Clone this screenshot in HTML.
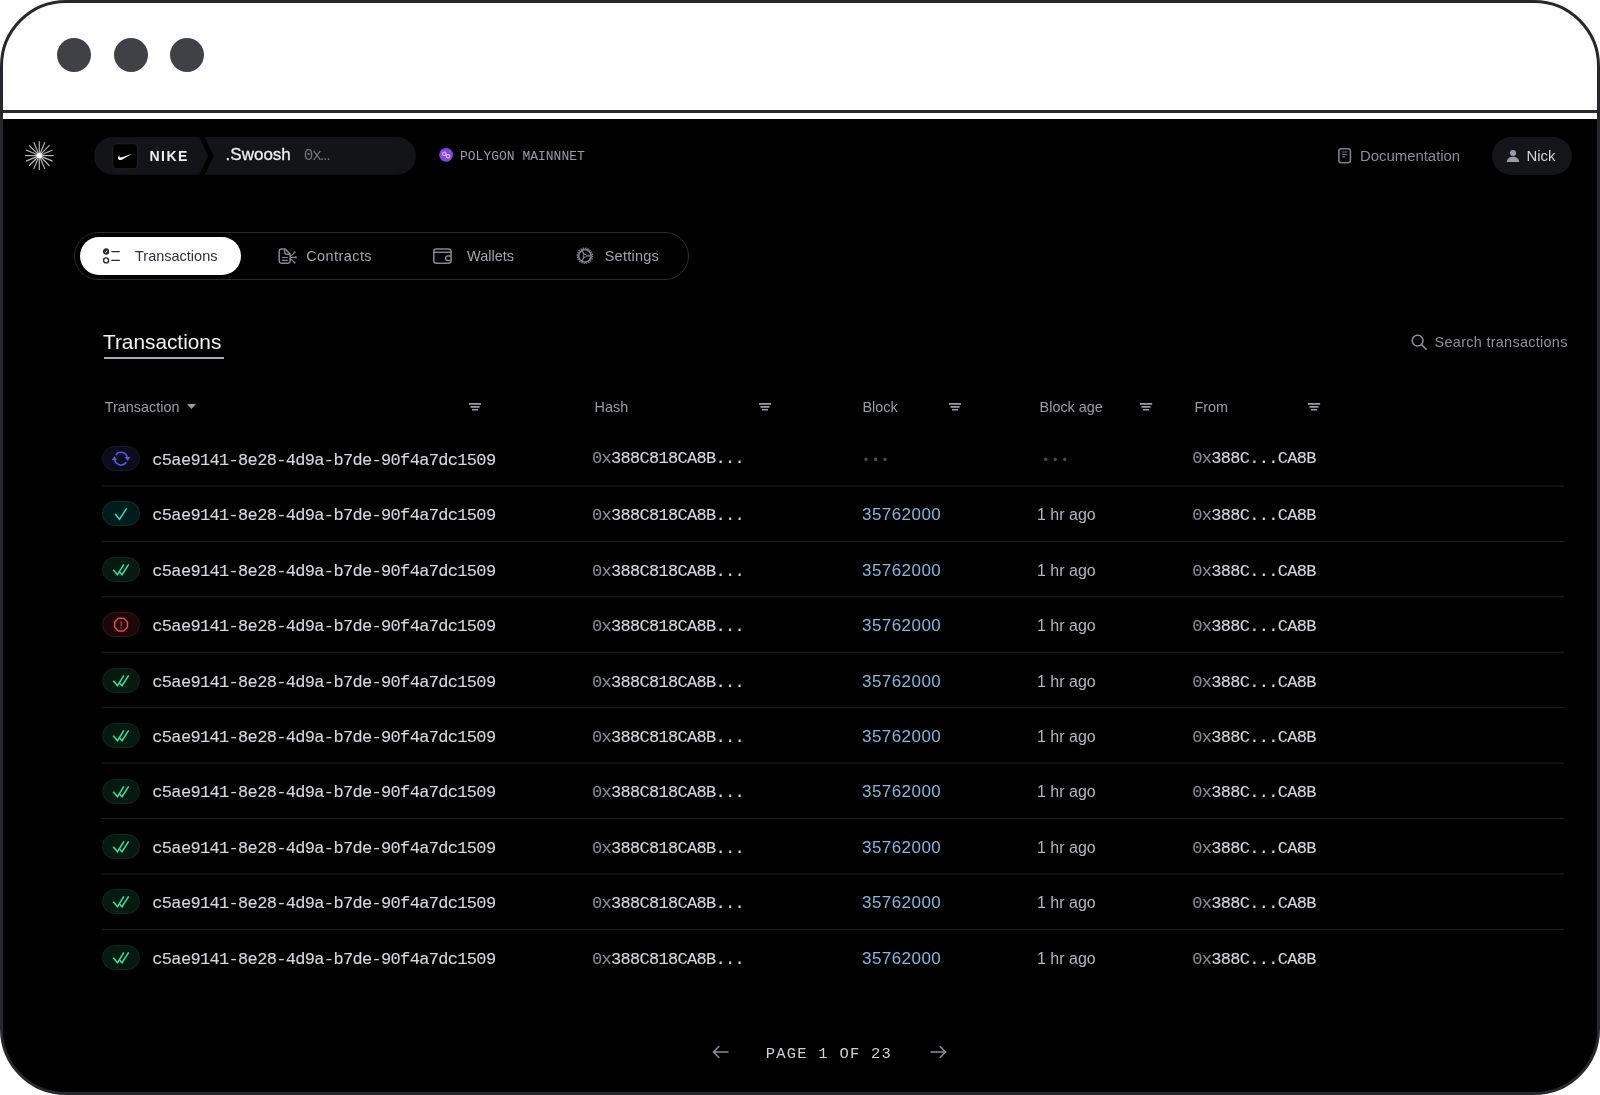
<!DOCTYPE html>
<html lang="en">
<head>
<meta charset="utf-8">
<title>Transactions</title>
<style>
*{box-sizing:border-box;margin:0;padding:0}
html,body{width:1600px;height:1095px;background:#fff;overflow:hidden}
body{position:relative;font-family:"Liberation Sans",sans-serif;-webkit-font-smoothing:antialiased}
.frame{position:absolute;left:0;top:0;width:1600px;height:1095px;border:3px solid #26282e;border-radius:66px;overflow:hidden;background:linear-gradient(to bottom,#fff 0,#fff 300px,#000 300px,#000 100%)}
.inner{position:absolute;left:-3px;top:-3px;width:1600px;height:1095px;will-change:transform}
.abs{position:absolute}
.t{position:absolute;white-space:nowrap;line-height:1}
.mono{font-family:"Liberation Mono",monospace}
.c1,.c2,.c5{-webkit-text-stroke:0.12px}
.dot{position:absolute;top:38px;width:34px;height:34px;border-radius:50%;background:#404147}
.bar{position:absolute;left:0;top:110px;width:1600px;height:3px;background:#26282e}
.app{position:absolute;left:0;top:119px;width:1600px;height:976px;background:#000}
svg{position:absolute;overflow:visible}
.hd{color:#9c9ea6;font-size:14.4px}
.pill{position:absolute;left:102px;width:38px;height:25px;border-radius:13px;border:1px solid}
.c1{left:152.3px;font-size:17px;letter-spacing:-0.67px;color:#d6d7dc}
.c2{left:592px;font-size:17px;letter-spacing:-0.7px;color:#d6d7dc}
.c3{left:862px;font-size:17px;color:#82b8e1}
.c4{left:1037px;font-size:16px;color:#b3b5bc}
.c5{left:1192.3px;font-size:17px;letter-spacing:-0.7px;color:#d6d7dc}
.g{color:#8a8c94}
</style>
</head>
<body>
<div class="frame"><div class="inner">
  <div class="dot" style="left:57px"></div>
  <div class="dot" style="left:113.5px"></div>
  <div class="dot" style="left:170.4px"></div>
  <div class="bar"></div>
  <div class="app"></div>
<!--CONTENT-->

  <!-- top nav -->
  <svg class="abs" style="left:0;top:0" width="80" height="200"><g stroke="#b9b9b9" stroke-width="1.15" stroke-linecap="butt"><line x1="41.30" y1="155.60" x2="53.70" y2="155.60"/><line x1="41.15" y1="156.37" x2="52.60" y2="161.11"/><line x1="40.71" y1="157.01" x2="49.48" y2="165.78"/><line x1="40.07" y1="157.45" x2="44.81" y2="168.90"/><line x1="39.30" y1="157.60" x2="39.30" y2="170.00"/><line x1="38.53" y1="157.45" x2="33.79" y2="168.90"/><line x1="37.89" y1="157.01" x2="29.12" y2="165.78"/><line x1="37.45" y1="156.37" x2="26.00" y2="161.11"/><line x1="37.30" y1="155.60" x2="24.90" y2="155.60"/><line x1="37.45" y1="154.83" x2="26.00" y2="150.09"/><line x1="37.89" y1="154.19" x2="29.12" y2="145.42"/><line x1="38.53" y1="153.75" x2="33.79" y2="142.30"/><line x1="39.30" y1="153.60" x2="39.30" y2="141.20"/><line x1="40.07" y1="153.75" x2="44.81" y2="142.30"/><line x1="40.71" y1="154.19" x2="49.48" y2="145.42"/><line x1="41.15" y1="154.83" x2="52.60" y2="150.09"/></g><circle cx="39.3" cy="155.6" r="2.6" fill="#fff"/></svg>
  <svg style="left:0;top:0" width="420" height="180">
    <path d="M113 137 H199.2 L208.1 155.9 L199.2 174.8 H113 A18.9 18.9 0 0 1 113 137Z" fill="#131417"/>
    <path d="M204.8 137 H397 A18.9 18.9 0 0 1 397 174.8 H204.8 L213.7 155.9Z" fill="#131417"/>
    <rect x="112.7" y="143.7" width="25" height="25.2" rx="4" fill="#000" stroke="#1d1e22" stroke-width="1.3"/>
    <path d="M132.3 153.8L122.2 159.4C120.2 160.5 118.4 160.1 118 158.8C117.7 157.7 118.3 156.2 119.5 154.9C119.1 156.2 119.3 157.3 120.6 157.4C121.3 157.4 122.1 157.2 122.9 156.9Z" fill="#fff"/>
  </svg>
  <div class="t" id="nike" style="left:149.5px;top:148.5px;font-size:14px;font-weight:700;letter-spacing:1.5px;color:#eceef2">NIKE</div>
  <div class="t" id="swoosh" style="left:225.6px;top:146.4px;font-size:17px;-webkit-text-stroke:0.3px;color:#eceef2">.Swoosh</div>
  <div class="t mono" id="ox" style="left:303.8px;top:147.6px;font-size:16px;letter-spacing:-1.2px;color:#74767e">0x…</div>
  <svg style="left:439px;top:148px" width="14" height="14" viewBox="0 0 14 14">
    <circle cx="7.1" cy="6.85" r="6.95" fill="#8247e5"/>
    <circle cx="5.3" cy="5.75" r="1.75" fill="none" stroke="#dccdf8" stroke-width="1.1"/>
    <circle cx="9" cy="8.2" r="1.75" fill="none" stroke="#dccdf8" stroke-width="1.1"/>
  </svg>
  <div class="t mono" id="poly" style="left:460px;top:149.6px;font-size:13px;color:#9a9ca4">POLYGON MAINNNET</div>

  <svg style="left:1338px;top:147px" width="14" height="18" viewBox="0 0 14 18" fill="none" stroke="#7c808a" stroke-width="1.6">
    <rect x="0.9" y="1.7" width="11.5" height="14" rx="2.4"/>
    <path d="M4.1 5h5.3M4.1 7.5h5.3M4.1 9.85h3" stroke-width="1.2" stroke="#6d717b"/>
  </svg>
  <div class="t" id="doc" style="left:1360px;top:149px;font-size:14.9px;color:#8b8d95">Documentation</div>
  <div class="abs" style="left:1492px;top:137px;width:80px;height:38px;border-radius:19px;background:#141518"></div>
  <svg style="left:1507px;top:150px" width="12" height="12" viewBox="0 0 12 12" fill="#9a9ca6">
    <circle cx="6.05" cy="2.95" r="3.05"/>
    <path d="M-0.2 11.9c0.2-3.4 2.9-5.2 6.2-5.2s6 1.8 6.2 5.2z"/>
  </svg>
  <div class="t" id="nick" style="left:1526.5px;top:149px;font-size:14.9px;color:#d3d4d9">Nick</div>

  <!-- tabs -->
  <div class="abs" style="left:74px;top:232px;width:615px;height:48px;border-radius:24px;border:1px solid #2b2c31"></div>
  <div class="abs" style="left:80px;top:237px;width:161px;height:38px;border-radius:19px;background:#fff"></div>
  <svg style="left:102px;top:248px" width="20" height="17" viewBox="0 0 20 17" fill="none" stroke="#2a2b30" stroke-width="1.4">
    <circle cx="4.05" cy="3.5" r="2.5" fill="#2a2b30"/>
    <path d="M2.9 3.7l0.8 0.8l1.5-1.9" stroke="#fff" stroke-width="0.9"/>
    <circle cx="4.05" cy="12.4" r="2.5"/>
    <path d="M9.9 3.6h7.4M9.9 12.4h7.4" stroke-linecap="round"/>
  </svg>
  <div class="t" id="tab1" style="left:135px;top:249px;font-size:14.5px;color:#303137">Transactions</div>

  <svg style="left:272px;top:242px" width="30" height="28" viewBox="0 0 30 28" fill="none" stroke="#868892" stroke-width="1.5" stroke-linejoin="round">
    <path d="M13.4 6.9H9.5A2.3 2.3 0 0 0 7.2 9.2V18.9A2.3 2.3 0 0 0 9.5 21.2H15.8A2.3 2.3 0 0 0 18.1 18.9V12.2L13.4 6.9"/>
    <path d="M12.7 7.2V10.6A1.6 1.6 0 0 0 14.3 12.2H18.1"/>
    <path d="M10.2 15.5H15.8M10.2 18.3H15.8" stroke-width="1.2"/>
    <path d="M18.6 13.6Q20.6 13.4 21.9 10.9M18.8 15.4H23.2M18.6 17.4Q20.6 17.8 21.9 19.9" stroke-width="1.1"/>
    <circle cx="22.5" cy="10.3" r="1.1" fill="#868892" stroke="none"/><circle cx="23.8" cy="15.4" r="1.1" fill="#868892" stroke="none"/><circle cx="22.5" cy="20.5" r="1.1" fill="#868892" stroke="none"/>
  </svg>
  <div class="t" id="tab2" style="left:306.2px;top:249px;font-size:14.5px;letter-spacing:0.42px;color:#a3a5ad">Contracts</div>

  <svg style="left:433px;top:248px" width="20" height="16" viewBox="0 0 20 16" fill="none" stroke="#868892" stroke-width="1.5">
    <rect x="0.8" y="0.9" width="17.3" height="14.3" rx="2.6"/>
    <path d="M0.8 4.3h17.3"/>
    <path d="M18.1 8h-3.2a2.2 2.2 0 0 0 0 4.4h3.2"/>
  </svg>
  <div class="t" id="tab3" style="left:467px;top:249px;font-size:14.5px;color:#a3a5ad">Wallets</div>

  <svg style="left:576px;top:247px" width="18" height="18" viewBox="0 0 18 18" fill="none" stroke="#868892">
    <circle cx="8.9" cy="8.8" r="7.5" stroke-width="1.6" stroke-dasharray="1.25 1.106"/>
    <circle cx="8.9" cy="8.8" r="6.2" stroke-width="1.5"/>
    <path d="M10.30 8.80L14.90 8.80M8.20 10.01L5.90 14.00M8.20 7.59L5.90 3.60" stroke-width="1.3"/>
    <circle cx="8.9" cy="8.8" r="1.5" stroke-width="1"/>
  </svg>
  <div class="t" id="tab4" style="left:604.7px;top:249px;font-size:14.5px;letter-spacing:0.25px;color:#a3a5ad">Settings</div>

  <!-- title -->
  <div class="t" id="title" style="left:103px;top:331.6px;font-size:20.8px;color:#f2f3f5">Transactions</div>
  <div class="abs" style="left:104px;top:357px;width:120px;height:2px;background:#a9abb2"></div>
  <svg style="left:1411px;top:334px" width="17" height="17" viewBox="0 0 17 17" fill="none" stroke="#8e9098" stroke-width="1.5">
    <circle cx="6.6" cy="6.6" r="5.4"/>
    <path d="M10.6 10.6l4.6 4.6" stroke-linecap="round"/>
  </svg>
  <div class="t" id="search" style="left:1434.6px;top:334.5px;font-size:14.5px;letter-spacing:0.26px;color:#8e9098">Search transactions</div>

  <!-- table head -->
  <div class="t hd" id="h1" style="left:104.8px;top:400.4px">Transaction</div>
  <svg style="left:186.5px;top:404px" width="9" height="5" viewBox="0 0 9 5"><path d="M0 0h9L4.5 5z" fill="#9c9ea6"/></svg>
  <svg style="left:468.0px;top:402px" width="14" height="10" viewBox="0 0 14 10"><path d="M0.9 1h12.2v1.8H0.9zM2.5 4h9v1.7h-9zM4 7h6v1.5H4z" fill="#9a9ca3"/></svg>
  <div class="t hd" id="h2" style="left:594.6px;top:400.4px">Hash</div>
  <svg style="left:758.0px;top:402px" width="14" height="10" viewBox="0 0 14 10"><path d="M0.9 1h12.2v1.8H0.9zM2.5 4h9v1.7h-9zM4 7h6v1.5H4z" fill="#9a9ca3"/></svg>
  <div class="t hd" id="h3" style="left:862.4px;top:400.4px">Block</div>
  <svg style="left:948.3px;top:402px" width="14" height="10" viewBox="0 0 14 10"><path d="M0.9 1h12.2v1.8H0.9zM2.5 4h9v1.7h-9zM4 7h6v1.5H4z" fill="#9a9ca3"/></svg>
  <div class="t hd" id="h4" style="left:1039.6px;top:400.4px">Block age</div>
  <svg style="left:1138.7px;top:402px" width="14" height="10" viewBox="0 0 14 10"><path d="M0.9 1h12.2v1.8H0.9zM2.5 4h9v1.7h-9zM4 7h6v1.5H4z" fill="#9a9ca3"/></svg>
  <div class="t hd" id="h5" style="left:1194.4px;top:400.4px">From</div>
  <svg style="left:1307.3px;top:402px" width="14" height="10" viewBox="0 0 14 10"><path d="M0.9 1h12.2v1.8H0.9zM2.5 4h9v1.7h-9zM4 7h6v1.5H4z" fill="#9a9ca3"/></svg>

  <div class="pill" style="top:446px;background:#0b0d1a;border-color:#15182f"><svg style="left:0;top:0" width="36" height="23" viewBox="0 0 36 23"><g transform="translate(18 11.6)" fill="none" stroke="#5b55f6" stroke-width="1.6"><path d="M-5.22 -3.52A6.3 6.3 0 0 1 6.27 -0.66"/><path d="M5.22 3.52A6.3 6.3 0 0 1 -6.27 0.66"/><path d="M3.9 -1.5H9.3L6.6 2.3z" fill="#5b55f6" stroke="none"/><path d="M-3.9 1.5H-9.3L-6.6 -2.3z" fill="#5b55f6" stroke="none"/></g></svg></div>
  <div class="t mono c1" style="top:452px">c5ae9141-8e28-4d9a-b7de-90f4a7dc1509</div>
  <div class="t mono c2" style="top:450px"><span class="g">0x</span>388C818CA8B...</div>
  <div class="t mono" id="dots1" style="left:862.3px;top:454.5px;font-size:12.5px;letter-spacing:2px;color:#494b53">•••</div>
  <div class="t mono" id="dots2" style="left:1042.1px;top:454.5px;font-size:12.5px;letter-spacing:2px;color:#494b53">•••</div>
  <div class="t mono c5" style="top:450px"><span class="g">0x</span>388C...CA8B</div>
  <div class="pill" style="top:501px;background:#021b1b;border-color:#053333"><svg style="left:0;top:0" width="36" height="23" viewBox="0 0 36 23" fill="none" stroke="#12e4d4" stroke-width="1.5"><path d="M12.2 12.1L16.6 17.2L23.7 6.1"/></svg></div>
  <div class="t mono c1" style="top:507px">c5ae9141-8e28-4d9a-b7de-90f4a7dc1509</div>
  <div class="t mono c2" style="top:507px"><span class="g">0x</span>388C818CA8B...</div>
  <div class="t c3" style="top:506px;letter-spacing:0.45px">35762000</div>
  <div class="t c4" style="top:507px">1 hr ago</div>
  <div class="t mono c5" style="top:507px"><span class="g">0x</span>388C...CA8B</div>
  <div class="pill" style="top:557px;background:#061a12;border-color:#0b2b1e"><svg style="left:0;top:0" width="36" height="23" viewBox="0 0 36 23" fill="none" stroke="#34e39a" stroke-width="1.5"><path d="M10.2 11.8L14.5 16.7L20.9 6.3"/><path d="M16 13.5L19 16.7L25.7 6.3"/></svg></div>
  <div class="t mono c1" style="top:563px">c5ae9141-8e28-4d9a-b7de-90f4a7dc1509</div>
  <div class="t mono c2" style="top:563px"><span class="g">0x</span>388C818CA8B...</div>
  <div class="t c3" style="top:562px;letter-spacing:0.45px">35762000</div>
  <div class="t c4" style="top:563px">1 hr ago</div>
  <div class="t mono c5" style="top:563px"><span class="g">0x</span>388C...CA8B</div>
  <div class="pill" style="top:612px;background:#1c0809;border-color:#3a1316"><svg style="left:0;top:0" width="36" height="23" viewBox="0 0 36 23"><g transform="translate(18.05 11.65)" fill="none" stroke="#e5484d" stroke-width="1.5"><path d="M-2.63 -6.35L2.63 -6.35L6.35 -2.63L6.35 2.63L2.63 6.35L-2.63 6.35L-6.35 2.63L-6.35 -2.63z" stroke-linejoin="round"/><path d="M0 -3.4V1.3M0 2.7V4.1" stroke="#a8282d" stroke-width="1.6"/></g></svg></div>
  <div class="t mono c1" style="top:618px">c5ae9141-8e28-4d9a-b7de-90f4a7dc1509</div>
  <div class="t mono c2" style="top:618px"><span class="g">0x</span>388C818CA8B...</div>
  <div class="t c3" style="top:617px;letter-spacing:0.45px">35762000</div>
  <div class="t c4" style="top:618px">1 hr ago</div>
  <div class="t mono c5" style="top:618px"><span class="g">0x</span>388C...CA8B</div>
  <div class="pill" style="top:668px;background:#061a12;border-color:#0b2b1e"><svg style="left:0;top:0" width="36" height="23" viewBox="0 0 36 23" fill="none" stroke="#34e39a" stroke-width="1.5"><path d="M10.2 11.8L14.5 16.7L20.9 6.3"/><path d="M16 13.5L19 16.7L25.7 6.3"/></svg></div>
  <div class="t mono c1" style="top:674px">c5ae9141-8e28-4d9a-b7de-90f4a7dc1509</div>
  <div class="t mono c2" style="top:674px"><span class="g">0x</span>388C818CA8B...</div>
  <div class="t c3" style="top:673px;letter-spacing:0.45px">35762000</div>
  <div class="t c4" style="top:674px">1 hr ago</div>
  <div class="t mono c5" style="top:674px"><span class="g">0x</span>388C...CA8B</div>
  <div class="pill" style="top:723px;background:#061a12;border-color:#0b2b1e"><svg style="left:0;top:0" width="36" height="23" viewBox="0 0 36 23" fill="none" stroke="#34e39a" stroke-width="1.5"><path d="M10.2 11.8L14.5 16.7L20.9 6.3"/><path d="M16 13.5L19 16.7L25.7 6.3"/></svg></div>
  <div class="t mono c1" style="top:729px">c5ae9141-8e28-4d9a-b7de-90f4a7dc1509</div>
  <div class="t mono c2" style="top:729px"><span class="g">0x</span>388C818CA8B...</div>
  <div class="t c3" style="top:728px;letter-spacing:0.45px">35762000</div>
  <div class="t c4" style="top:729px">1 hr ago</div>
  <div class="t mono c5" style="top:729px"><span class="g">0x</span>388C...CA8B</div>
  <div class="pill" style="top:779px;background:#061a12;border-color:#0b2b1e"><svg style="left:0;top:0" width="36" height="23" viewBox="0 0 36 23" fill="none" stroke="#34e39a" stroke-width="1.5"><path d="M10.2 11.8L14.5 16.7L20.9 6.3"/><path d="M16 13.5L19 16.7L25.7 6.3"/></svg></div>
  <div class="t mono c1" style="top:784px">c5ae9141-8e28-4d9a-b7de-90f4a7dc1509</div>
  <div class="t mono c2" style="top:784px"><span class="g">0x</span>388C818CA8B...</div>
  <div class="t c3" style="top:783px;letter-spacing:0.45px">35762000</div>
  <div class="t c4" style="top:784px">1 hr ago</div>
  <div class="t mono c5" style="top:784px"><span class="g">0x</span>388C...CA8B</div>
  <div class="pill" style="top:834px;background:#061a12;border-color:#0b2b1e"><svg style="left:0;top:0" width="36" height="23" viewBox="0 0 36 23" fill="none" stroke="#34e39a" stroke-width="1.5"><path d="M10.2 11.8L14.5 16.7L20.9 6.3"/><path d="M16 13.5L19 16.7L25.7 6.3"/></svg></div>
  <div class="t mono c1" style="top:840px">c5ae9141-8e28-4d9a-b7de-90f4a7dc1509</div>
  <div class="t mono c2" style="top:840px"><span class="g">0x</span>388C818CA8B...</div>
  <div class="t c3" style="top:839px;letter-spacing:0.45px">35762000</div>
  <div class="t c4" style="top:840px">1 hr ago</div>
  <div class="t mono c5" style="top:840px"><span class="g">0x</span>388C...CA8B</div>
  <div class="pill" style="top:889px;background:#061a12;border-color:#0b2b1e"><svg style="left:0;top:0" width="36" height="23" viewBox="0 0 36 23" fill="none" stroke="#34e39a" stroke-width="1.5"><path d="M10.2 11.8L14.5 16.7L20.9 6.3"/><path d="M16 13.5L19 16.7L25.7 6.3"/></svg></div>
  <div class="t mono c1" style="top:895px">c5ae9141-8e28-4d9a-b7de-90f4a7dc1509</div>
  <div class="t mono c2" style="top:895px"><span class="g">0x</span>388C818CA8B...</div>
  <div class="t c3" style="top:894px;letter-spacing:0.45px">35762000</div>
  <div class="t c4" style="top:895px">1 hr ago</div>
  <div class="t mono c5" style="top:895px"><span class="g">0x</span>388C...CA8B</div>
  <div class="pill" style="top:945px;background:#061a12;border-color:#0b2b1e"><svg style="left:0;top:0" width="36" height="23" viewBox="0 0 36 23" fill="none" stroke="#34e39a" stroke-width="1.5"><path d="M10.2 11.8L14.5 16.7L20.9 6.3"/><path d="M16 13.5L19 16.7L25.7 6.3"/></svg></div>
  <div class="t mono c1" style="top:951px">c5ae9141-8e28-4d9a-b7de-90f4a7dc1509</div>
  <div class="t mono c2" style="top:951px"><span class="g">0x</span>388C818CA8B...</div>
  <div class="t c3" style="top:950px;letter-spacing:0.45px">35762000</div>
  <div class="t c4" style="top:951px">1 hr ago</div>
  <div class="t mono c5" style="top:951px"><span class="g">0x</span>388C...CA8B</div>

  <svg style="left:0;top:0" width="1600" height="1095" fill="#1f2025"><rect x="102" y="485.50" width="1462" height="1"/><rect x="102" y="540.92" width="1462" height="1"/><rect x="102" y="596.34" width="1462" height="1"/><rect x="102" y="651.76" width="1462" height="1"/><rect x="102" y="707.18" width="1462" height="1"/><rect x="102" y="762.60" width="1462" height="1"/><rect x="102" y="818.02" width="1462" height="1"/><rect x="102" y="873.44" width="1462" height="1"/><rect x="102" y="928.86" width="1462" height="1"/></svg>
  <!-- pagination -->
  <svg style="left:712px;top:1045px" width="18" height="14" viewBox="0 0 18 14" fill="none" stroke="#8a8c94" stroke-width="1.5"><path d="M16.5 7H1.6M7.2 1.2L1.4 7l5.8 5.8"/></svg>
  <div class="t mono" id="page" style="left:765.7px;top:1046.6px;font-size:15.5px;letter-spacing:1.23px;color:#d0d1d6">PAGE 1 OF 23</div>
  <svg style="left:929px;top:1045px" width="18" height="14" viewBox="0 0 18 14" fill="none" stroke="#8a8c94" stroke-width="1.5"><path d="M1.5 7h14.9M10.8 1.2L16.6 7l-5.8 5.8"/></svg>

<!--/CONTENT-->
</div></div>
</body>
</html>
